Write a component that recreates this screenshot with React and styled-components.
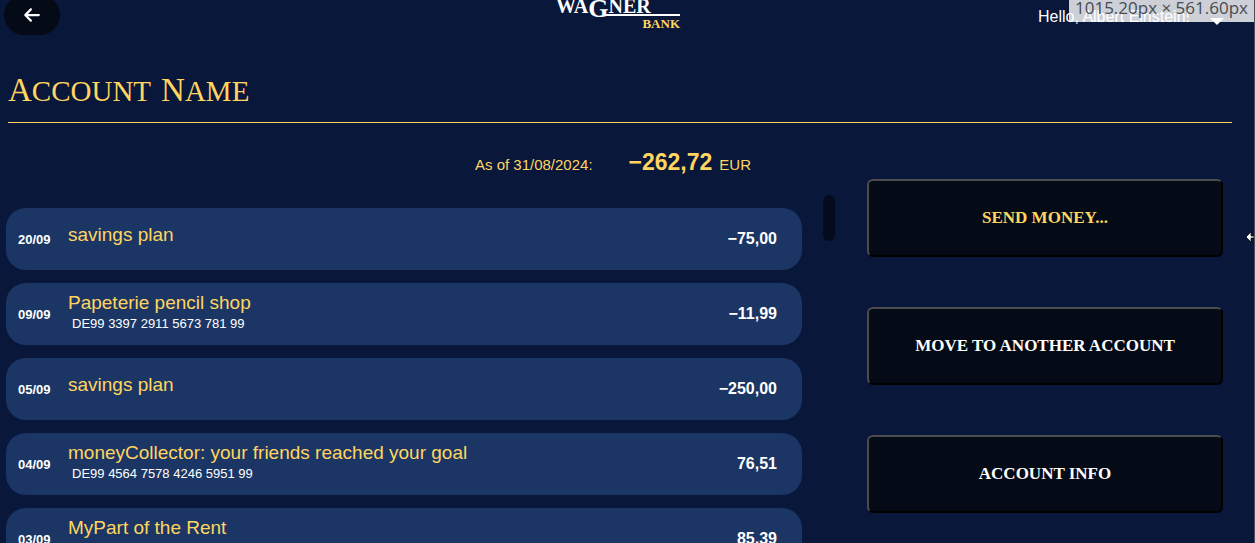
import React from "react";
import styled, { createGlobalStyle } from "styled-components";
import { FaArrowLeft } from "react-icons/fa6";

const sans = '"Liberation Sans", Arial, sans-serif';
const serif = '"Liberation Serif", "Times New Roman", serif';
const gold = "#ffd55f";

const GlobalStyle = createGlobalStyle`
  * { box-sizing: border-box; }
  body { margin: 0; background: #09173b; color: #fff; font-family: ${sans}; }
`;

const Page = styled.div`
  position: relative;
  height: 100vh;
  overflow: hidden;
  display: flex;
  flex-direction: column;
  border-right: 1px solid #4c4f58;
`;

const Header = styled.header`
  display: grid;
  grid-template-columns: 1fr auto 1fr;
  align-items: start;
  height: 64px;
  flex: none;
  padding: 0 22px 0 4px;
`;

const BackButton = styled.button`
  display: flex;
  align-items: center;
  justify-content: center;
  width: 56px;
  height: 40px;
  margin-top: -5px;
  border: 0;
  border-radius: 20px;
  background: #040b17;
  color: #fff;
  font-size: 18px;
`;

const Logo = styled.a`
  display: flex;
  flex-direction: column;
  width: 124px;
  margin-top: -6px;
  color: #fff;
  font: bold 20px/24px ${serif};
  text-decoration: none;
`;

const LogoName = styled.span`
  display: flex;
  height: 20px;
`;

const LogoG = styled.span`
  font-size: 26px;
  line-height: 30px;
`;

const LogoRule = styled.span`
  height: 2px;
  margin-left: 50px;
  background: #fff;
`;

const LogoBank = styled.span`
  align-self: flex-end;
  color: ${gold};
  font-size: 13px;
  line-height: 16px;
`;

const UserMenu = styled.button`
  justify-self: end;
  display: flex;
  align-items: center;
  gap: 20px;
  margin-right: 8px;
  padding: 7px 0 0;
  border: 0;
  background: none;
  color: #fff;
  font: 16px/20px ${sans};
`;

const Caret = styled.span`
  margin-top: 8px;
  border: 7px solid transparent;
  border-top-color: #fff;
  border-bottom: 0;
`;

const Title = styled.h1`
  flex: none;
  display: flex;
  gap: 10px;
  margin: 0 22px 0 8px;
  padding-top: 6px;
  height: 59px;
  border-bottom: 1px solid ${gold};
  color: ${gold};
  font: 29px/40px ${serif};
  text-transform: uppercase;
`;

const TitleWord = styled.span`
  display: block;
  &::first-letter { font-size: 33px; }
`;

const Balance = styled.p`
  flex: none;
  display: flex;
  align-items: baseline;
  justify-content: center;
  margin: 0;
  padding: 24px 28px 0 0;
  height: 56px;
  color: ${gold};
  font-size: 15px;
  line-height: 30px;
`;

const BalanceAmount = styled.strong`
  margin: 0 7px 0 36px;
  font-size: 23px;
`;

const Main = styled.main`
  flex: 1;
  min-height: 0;
  display: grid;
  grid-template-columns: minmax(0, 817fr) 12px minmax(0, 388fr);
  padding: 0 31px 0 6px;
`;

const Transactions = styled.ul`
  display: flex;
  flex-direction: column;
  gap: 13px;
  margin: 0;
  padding: 29px 21px 0 0;
  list-style: none;
`;

const Transaction = styled.li`
  flex: none;
  display: grid;
  grid-template-columns: 50px 1fr auto;
  align-items: center;
  height: 62px;
  padding: 0 25px 0 12px;
  border-radius: 20px;
  background: #1b3665;
`;

const DateLabel = styled.time`
  font-size: 13px;
  font-weight: bold;
`;

const Details = styled.div`
  align-self: start;
  padding-top: ${(p) => (p.$single ? 16 : 9)}px;
`;

const Name = styled.div`
  color: ${gold};
  font-size: 19px;
  line-height: 22px;
`;

const Iban = styled.div`
  padding-left: 4px;
  font-size: 13px;
  line-height: 20px;
`;

const Amount = styled.strong`
  font-size: 16px;
`;

const ScrollThumb = styled.div`
  height: 46px;
  margin-top: 16px;
  border-radius: 6px;
  background: #040b1c;
`;

const Actions = styled.nav`
  display: flex;
  flex-direction: column;
  gap: 50px;
  padding-left: 32px;
`;

const ActionButton = styled.button`
  height: 78px;
  flex: none;
  border: 2px solid;
  border-color: #4c4c4c #000 #000 #4c4c4c;
  border-radius: 6px;
  background: #040b17;
  color: ${(p) => (p.$primary ? gold : "#fff")};
  font: bold 17px/24px ${serif};
  text-transform: uppercase;
`;

const SizeBadge = styled.output`
  position: absolute;
  top: 0;
  right: 0;
  height: 22px;
  padding: 0 6px 0 6px;
  background: rgba(255, 255, 255, 0.8);
  color: #484a50;
  font: 17px/15px "Open Sans", sans-serif;
`;

const Pointer = styled.svg`
  position: absolute;
  top: 231px;
  right: 0;
`;

const transactions = [
  { date: "20/09", name: "savings plan", amount: "−75,00" },
  { date: "09/09", name: "Papeterie pencil shop", iban: "DE99 3397 2911 5673 781 99", amount: "−11,99" },
  { date: "05/09", name: "savings plan", amount: "−250,00" },
  { date: "04/09", name: "moneyCollector: your friends reached your goal", iban: "DE99 4564 7578 4246 5951 99", amount: "76,51" },
  { date: "03/09", name: "MyPart of the Rent", amount: "85,39", paired: true },
];

export default function App() {
  return (
    <Page>
      <GlobalStyle />
      <Header>
        <BackButton aria-label="Back"><FaArrowLeft /></BackButton>
        <Logo href="#">
          <LogoName>WA<LogoG>G</LogoG>NER</LogoName>
          <LogoRule />
          <LogoBank>BANK</LogoBank>
        </Logo>
        <UserMenu>Hello, Albert Einstein!<Caret /></UserMenu>
      </Header>
      <Title>
        <TitleWord>Account</TitleWord>
        <TitleWord>Name</TitleWord>
      </Title>
      <Balance>
        As of 31/08/2024:
        <BalanceAmount>−262,72</BalanceAmount>
        EUR
      </Balance>
      <Main>
        <Transactions>
          {transactions.map((t) => (
            <Transaction key={t.date}>
              <DateLabel>{t.date}</DateLabel>
              <Details $single={!t.iban && !t.paired}>
                <Name>{t.name}</Name>
                {t.iban && <Iban>{t.iban}</Iban>}
              </Details>
              <Amount>{t.amount}</Amount>
            </Transaction>
          ))}
        </Transactions>
        <ScrollThumb />
        <Actions>
          <ActionButton $primary>Send money...</ActionButton>
          <ActionButton>Move to another account</ActionButton>
          <ActionButton>Account info</ActionButton>
        </Actions>
      </Main>
      <SizeBadge>1015.20px × 561.60px</SizeBadge>
      <Pointer width="8" height="12" viewBox="0 0 8 12" aria-hidden="true">
        <path d="M0 6l5-5v4h3v2H5v4z" fill="#fff" stroke="#000" strokeWidth=".7" />
      </Pointer>
    </Page>
  );
}
